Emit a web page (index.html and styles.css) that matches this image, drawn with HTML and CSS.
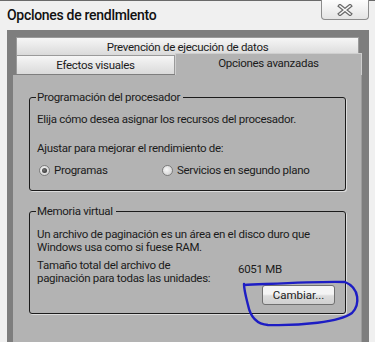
FILE: index.html
```html
<!DOCTYPE html>
<html lang="es">
<head>
  <meta charset="UTF-8">
  <title>Opciones de rendimiento</title>
  <link rel="stylesheet" href="styles.css">
</head>
<body>

  <div class="titlebar">
    <span class="title">Opclones de rendlmlento</span>
    <div class="close">
      <svg width="16" height="12" viewBox="0 0 16 12">
        <path d="M3 2 L13 10 M13 2 L3 10" stroke="#6a6a6a" stroke-width="4" stroke-linecap="square"/>
        <path d="M3 2 L13 10 M13 2 L3 10" stroke="#fafafa" stroke-width="1.6" stroke-linecap="square"/>
      </svg>
    </div>
  </div>

  <div class="frame">
    <div class="tabrow top">
      <div class="tab wide">Prevención de ejecución de datos</div>
    </div>
    <div class="tabrow">
      <div class="tab">Efectos visuales</div>
      <div class="tab active">Opciones avanzadas</div>
    </div>

    <div class="panel">
      <fieldset class="group">
        <legend>Programación del procesador</legend>
        <p>Elija cómo desea asignar los recursos del procesador.</p>
        <p class="gap">Ajustar para mejorar el rendimiento de:</p>
        <div class="radios">
          <label class="radio first"><span class="dot checked"></span>Programas</label>
          <label class="radio"><span class="dot"></span>Servicios en segundo plano</label>
        </div>
      </fieldset>

      <fieldset class="group memory">
        <legend>Memoria virtual</legend>
        <p>Un archivo de paginación es un área en el disco duro que<br>Windows usa como si fuese RAM.</p>
        <div class="size">
          <p>Tamaño total del archivo de<br>paginación para todas las unidades:</p>
          <span class="mb">6051 MB</span>
        </div>
        <div class="actions">
          <button class="btn">Cambiar...</button>
        </div>
      </fieldset>
    </div>
  </div>

  <svg class="scribble" width="375" height="342" viewBox="0 0 375 342">
    <path d="M244 285 C270 284, 320 281, 345 282 C360 288, 360 305, 352 313 C340 322, 300 326, 268 325 C255 324, 250 315, 248 305 C246 297, 244 290, 244 284"
          fill="none" stroke="#1d1dc4" stroke-width="2.4" stroke-linecap="round"/>
  </svg>

</body>
</html>
```

FILE: styles.css
```css
body {
  margin: 0;
  background: #f0f0f0;
  font-family: Roboto, Arial, sans-serif;
  font-size: 11.5px;
  letter-spacing: -0.3px;
  color: #1b1b1b;
  height: 342px;
  overflow: hidden;
  position: relative;
}
.titlebar {
  height: 30px;
  display: flex;
  align-items: flex-start;
  justify-content: space-between;
  border-top: 1px solid #6a6a6a;
  box-sizing: border-box;
}
.title {
  font-size: 14px;
  font-weight: 500;
  margin: 6px 0 0 7px;
  color: #111;
}
.close {
  width: 46px;
  height: 19px;
  margin: -1px 6px 0 0;
  border: 1px solid #8c8c8c;
  border-top: none;
  border-radius: 0 0 4px 4px;
  background: linear-gradient(#fdfdfd, #e4e4e4);
  display: flex;
  align-items: center;
  justify-content: center;
}
.frame {
  margin: 0 6px 0 7px;
  background: #7e7e7e;
  padding: 7px 7px 0 6px;
  height: 312px;
  box-sizing: border-box;
}
.tabrow {
  display: flex;
  padding: 0 3px;
}
.tab {
  height: 19px;
  box-sizing: border-box;
  border: 1px solid #9a9a9a;
  border-bottom: none;
  background: linear-gradient(#f6f6f6, #dadada);
  text-align: center;
  line-height: 19px;
  width: 159px;
}
.tab.wide {
  width: 343px;
  height: 18px;
  line-height: 18px;
}
.tabrow .tab.active {
  width: 187px;
  height: 22px;
  margin-top: -2px;
  margin-right: -4px;
  background: #b3b3b3;
  border-color: #cfcfcf;
  line-height: 19px;
}
.panel {
  background: #b3b3b3;
  height: 267px;
  padding: 15px 15px 0 16px;
  box-sizing: border-box;
  border-right: 1px solid #9c9c9c;
}
.group {
  margin: 0;
  padding: 9px 8px 0 7px;
  border: 1px solid #1c1c1c;
  border-radius: 3px;
  box-shadow: 1px 1px 0 #dcdcdc;
  height: 101px;
  box-sizing: border-box;
  white-space: nowrap;
}
.group legend {
  padding: 0 3px 0 1px;
  margin-left: -1px;
}
.group p {
  margin: 0;
  line-height: 12.5px;
}
.group .gap {
  margin-top: 16px;
}
.radios {
  display: flex;
  margin-top: 9px;
  align-items: center;
}
.radio {
  display: flex;
  align-items: center;
  gap: 4px;
}
.radio.first {
  width: 123px;
}
.dot {
  flex-shrink: 0;
  width: 11px;
  height: 11px;
  border-radius: 50%;
  border: 1px solid #7c7c7c;
  box-sizing: border-box;
  background: radial-gradient(circle at 40% 40%, #f8f8f8, #c8c8c8);
  position: relative;
  margin-left: 2px;
}
.dot.checked::after {
  content: "";
  position: absolute;
  left: 2px;
  top: 2px;
  width: 5px;
  height: 5px;
  border-radius: 50%;
  background: radial-gradient(circle at 40% 40%, #777, #222);
}
.memory {
  margin-top: 13px;
  height: 110px;
  padding-top: 10px;
}
.size {
  display: flex;
  align-items: center;
  margin-top: 6px;
}
.size p {
  width: 201px;
}
.mb {
  margin-top: -6px;
}
.actions {
  display: flex;
  justify-content: flex-end;
  margin-top: 1px;
  padding-right: 2px;
}
.btn {
  font-family: inherit;
  font-size: 11.5px;
  letter-spacing: 0;
  color: #1b1b1b;
  width: 73px;
  height: 20px;
  padding: 0;
  border: 1px solid #707070;
  border-radius: 3px;
  background: linear-gradient(#f4f4f4 45%, #dcdcdc 55%, #d0d0d0);
}
.scribble {
  position: absolute;
  left: 0;
  top: 0;
  pointer-events: none;
}
```
